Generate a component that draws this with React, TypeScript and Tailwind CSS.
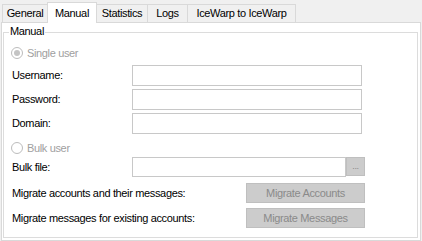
const tabs = [
  { label: 'General', w: 'w-[45px]' },
  { label: 'Manual', w: 'w-[50px]', active: true },
  { label: 'Statistics', w: 'w-[51px]' },
  { label: 'Logs', w: 'w-[40px]' },
  { label: 'IceWarp to IceWarp', w: 'w-[109px]' },
];

const Radio = ({ checked, label }: { checked?: boolean; label: string }) => (
  <div className="flex items-center h-[12px] pl-[7px] gap-[4px]">
    <span className="w-[12px] h-[12px] rounded-full border border-[#bcbcbc] bg-white flex items-center justify-center">
      {checked && <span className="w-[6px] h-[6px] rounded-full bg-[#c4c4c4]" />}
    </span>
    <span className="text-[#a0a0a0]">{label}</span>
  </div>
);

const Field = ({ label, mt }: { label: string; mt: string }) => (
  <div className={`flex items-center h-[21px] pl-[8px] ${mt}`}>
    <span className="w-[120px]">{label}</span>
    <div className="w-[230px] h-[21px] border border-[#c8c8c8] bg-white" />
  </div>
);

const ActionRow = ({ label, button, mt }: { label: string; button: string; mt: string }) => (
  <div className={`flex items-center h-[20px] pl-[8px] ${mt}`}>
    <span className="w-[234px]">{label}</span>
    <button className="w-[119px] h-[20px] border border-[#bfbfbf] bg-[#cccccc] text-[#8a8a8a] flex items-center justify-center">
      {button}
    </button>
  </div>
);

export default function App() {
  return (
    <div className="w-[422px] h-[241px] overflow-hidden bg-[#f0f0f0] text-black text-[11px] tracking-[-0.35px] font-['Liberation_Sans',Arial,sans-serif] leading-none flex flex-col">
      {/* Tab strip */}
      <div className="flex items-end h-[22px] pl-[2px] relative z-10">
        {tabs.map((t, i) =>
          t.active ? (
            <div
              key={t.label}
              className={`${t.w} h-[21px] -mb-px bg-white border border-b-0 border-[#d9d9d9] flex items-start justify-center pt-[5px] -mr-px`}
            >
              {t.label}
            </div>
          ) : (
            <div
              key={t.label}
              className={`${t.w} h-[18px] bg-[#f0f0f0] border-t border-l border-[#d9d9d9] ${i === tabs.length - 1 ? 'border-r' : ''} flex items-center justify-center`}
            >
              {t.label}
            </div>
          )
        )}
      </div>

      {/* Tab panel */}
      <div className="flex-1 ml-[1px] w-[420px] bg-white border border-[#d9d9d9] pt-[9px] pl-[1px]">
        <div className="relative w-[415px] h-[206px] border border-[#dcdcdc] flex flex-col">
          <span className="absolute -top-[7px] left-[5px] bg-white px-[1px]">Manual</span>

          <div className="mt-[14px]">
            <Radio checked label="Single user" />
          </div>
          <Field label="Username:" mt="mt-[6px]" />
          <Field label="Password:" mt="mt-[3px]" />
          <Field label="Domain:" mt="mt-[3px]" />

          <div className="mt-[8px]">
            <Radio label="Bulk user" />
          </div>

          <div className="flex items-center h-[20px] pl-[8px] mt-[3px]">
            <span className="w-[120px]">Bulk file:</span>
            <div className="w-[214px] h-[20px] border border-[#c8c8c8] bg-white" />
            <button className="w-[19px] h-[19px] self-start border border-[#bfbfbf] bg-[#cccccc] text-[#8a8a8a] text-[9px] flex items-end justify-center pb-[4px]">
              ...
            </button>
          </div>

          <ActionRow label="Migrate accounts and their messages:" button="Migrate Accounts" mt="mt-[6px]" />
          <ActionRow label="Migrate messages for existing accounts:" button="Migrate Messages" mt="mt-[5px]" />
        </div>
      </div>
    </div>
  );
}
